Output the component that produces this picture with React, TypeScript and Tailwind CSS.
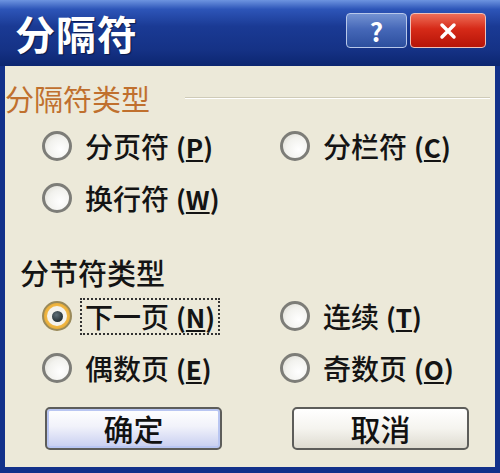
import React from 'react'

const FONT = { fontFamily: '"Noto Sans CJK SC", "Noto Sans", sans-serif' }

function Radio({ checked }: { checked?: boolean }) {
  return (
    <span
      className={
        'relative flex h-[30px] w-[30px] shrink-0 items-center justify-center rounded-full ' +
        (checked
          ? 'bg-[radial-gradient(circle,#f6d58a_0%,#f0b540_60%,#c8962e_100%)] border-2 border-[#9a8a5a]'
          : 'border-[3px] border-[#7d7d78] bg-[radial-gradient(circle_at_65%_65%,#ffffff_0%,#f2f2ee_55%,#d8d7ce_100%)]')
      }
    >
      {checked && (
        <span className="flex h-[20px] w-[20px] items-center justify-center rounded-full bg-[#f4f3ee]">
          <span className="h-[11px] w-[11px] rounded-full bg-[radial-gradient(circle_at_40%_35%,#5f6f78_0%,#1f2a2e_80%)]" />
        </span>
      )}
    </span>
  )
}

function Mnemonic({ label, letter }: { label: string; letter: string }) {
  return (
    <span className="flex items-center whitespace-nowrap">
      <span>{label}</span>
      <span className="ml-[7px] text-[26px] font-semibold">
        (<span className="underline decoration-2 underline-offset-2">{letter}</span>)
      </span>
    </span>
  )
}

function Option({ label, letter, checked, focused }: { label: string; letter: string; checked?: boolean; focused?: boolean }) {
  return (
    <div className="flex h-[52px] items-center gap-[8px]">
      <Radio checked={checked} />
      <span
        className={
          'flex h-[37px] items-center px-[3px] ' +
          (focused ? 'border-2 border-dotted border-[#333]' : 'border-2 border-transparent')
        }
      >
        <Mnemonic label={label} letter={letter} />
      </span>
    </div>
  )
}

function XpButton({ children, primary }: { children: React.ReactNode; primary?: boolean }) {
  return (
    <button
      className={
        'flex h-[43px] w-[177px] items-center justify-center rounded-[5px] border-2 border-[#5d5d5a] text-[30px] font-medium text-[#111] ' +
        (primary
          ? 'bg-[linear-gradient(#ffffff_0%,#f1f2fa_45%,#c6cdf0_100%)] shadow-[inset_0_0_0_2px_#b9c6f2]'
          : 'bg-[linear-gradient(#ffffff_0%,#f5f4ef_50%,#dedbd0_100%)]')
      }
    >
      {children}
    </button>
  )
}

export default function App() {
  return (
    <div
      className="flex h-[473px] w-[500px] flex-col overflow-hidden bg-[#12318a] text-[#141414]"
      style={FONT}
    >
      {/* title bar */}
      <div className="flex h-[66px] shrink-0 items-start justify-between bg-[linear-gradient(#6d94e0_0%,#2d55b8_14%,#1a3a94_40%,#153286_75%,#0c2670_100%)] pl-[15px] pr-[14px]">
        <span className="mt-[9px] text-[40px] font-bold leading-[48px] tracking-[1px] text-white [text-shadow:1px_1px_1px_#0a1a4a]">
          分隔符
        </span>
        <div className="mt-[13px] flex gap-[3px]">
          <div className="flex h-[35px] w-[61px] items-center justify-center rounded-[4px] border border-[#b8c8ea] bg-[linear-gradient(#7392d2_0%,#4668b8_45%,#2c4f9e_100%)] text-[26px] font-bold text-white">
            ?
          </div>
          <div className="flex h-[35px] w-[76px] items-center justify-center rounded-[4px] border border-[#f0c0b8] bg-[linear-gradient(#ee6e58_0%,#d62a18_45%,#b61408_100%)]">
            <svg width="22" height="20" viewBox="0 0 22 20">
              <path d="M5 4 L17 16 M17 4 L5 16" stroke="white" strokeWidth="3.5" strokeLinecap="round" />
            </svg>
          </div>
        </div>
      </div>

      {/* client area */}
      <div className="mx-[5px] mb-[6px] flex flex-1 flex-col bg-[#ece9d9] text-[28px] font-medium">
        <div className="mt-[16px] flex h-[32px] items-center">
          <span className="whitespace-nowrap text-[29px] font-normal text-[#c0702e] leading-none">分隔符类型</span>
          <span className="ml-[35px] mr-[5px] h-[2px] flex-1 bg-[#cfcbb8] border-b border-white" />
        </div>

        <div className="mt-[6px] grid grid-cols-[238px_1fr] pl-[37px]">
          <Option label="分页符" letter="P" />
          <Option label="分栏符" letter="C" />
          <Option label="换行符" letter="W" />
        </div>

        <div className="mt-[30px] flex h-[36px] items-center pl-[15px]">
          <span className="text-[29px] leading-none">分节符类型</span>
        </div>

        <div className="grid grid-cols-[238px_1fr] pl-[37px]">
          <Option label="下一页" letter="N" checked focused />
          <Option label="连续" letter="T" />
          <Option label="偶数页" letter="E" />
          <Option label="奇数页" letter="O" />
        </div>

        <div className="mt-[13px] flex gap-[70px] pl-[40px]">
          <XpButton primary>确定</XpButton>
          <XpButton>取消</XpButton>
        </div>
      </div>
    </div>
  )
}
